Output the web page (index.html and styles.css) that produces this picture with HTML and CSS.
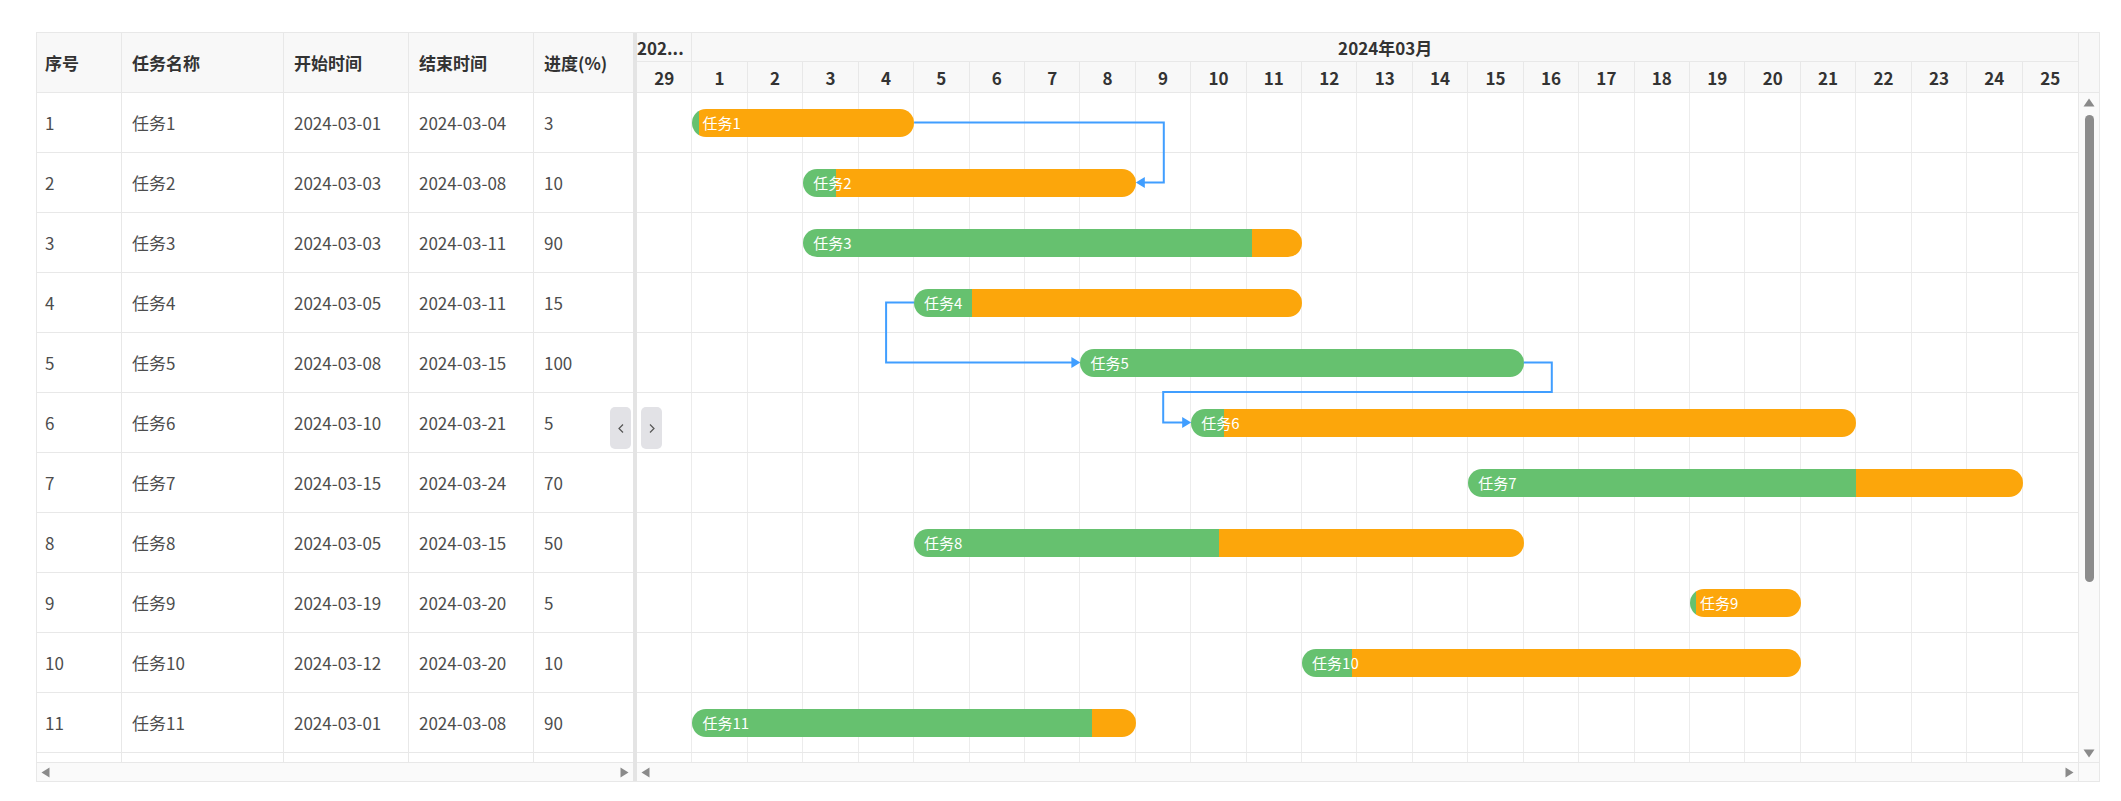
FILE: index.html
```html
<!DOCTYPE html>
<html lang="zh-CN">
<head>
<meta charset="utf-8">
<title>甘特图</title>
<link rel="stylesheet" href="styles.css">
</head>
<body>
<div class="wrap">
  <div class="table-pane">
    <div class="thead">
      <div class="th c1">序号</div>
      <div class="th c2">任务名称</div>
      <div class="th c3">开始时间</div>
      <div class="th c4">结束时间</div>
      <div class="th c5">进度(%)</div>
    </div>
    <div class="tbody">
      <div class="tr"><div class="td c1">1</div><div class="td c2">任务1</div><div class="td c3">2024-03-01</div><div class="td c4">2024-03-04</div><div class="td c5">3</div></div>
      <div class="tr"><div class="td c1">2</div><div class="td c2">任务2</div><div class="td c3">2024-03-03</div><div class="td c4">2024-03-08</div><div class="td c5">10</div></div>
      <div class="tr"><div class="td c1">3</div><div class="td c2">任务3</div><div class="td c3">2024-03-03</div><div class="td c4">2024-03-11</div><div class="td c5">90</div></div>
      <div class="tr"><div class="td c1">4</div><div class="td c2">任务4</div><div class="td c3">2024-03-05</div><div class="td c4">2024-03-11</div><div class="td c5">15</div></div>
      <div class="tr"><div class="td c1">5</div><div class="td c2">任务5</div><div class="td c3">2024-03-08</div><div class="td c4">2024-03-15</div><div class="td c5">100</div></div>
      <div class="tr"><div class="td c1">6</div><div class="td c2">任务6</div><div class="td c3">2024-03-10</div><div class="td c4">2024-03-21</div><div class="td c5">5</div></div>
      <div class="tr"><div class="td c1">7</div><div class="td c2">任务7</div><div class="td c3">2024-03-15</div><div class="td c4">2024-03-24</div><div class="td c5">70</div></div>
      <div class="tr"><div class="td c1">8</div><div class="td c2">任务8</div><div class="td c3">2024-03-05</div><div class="td c4">2024-03-15</div><div class="td c5">50</div></div>
      <div class="tr"><div class="td c1">9</div><div class="td c2">任务9</div><div class="td c3">2024-03-19</div><div class="td c4">2024-03-20</div><div class="td c5">5</div></div>
      <div class="tr"><div class="td c1">10</div><div class="td c2">任务10</div><div class="td c3">2024-03-12</div><div class="td c4">2024-03-20</div><div class="td c5">10</div></div>
      <div class="tr"><div class="td c1">11</div><div class="td c2">任务11</div><div class="td c3">2024-03-01</div><div class="td c4">2024-03-08</div><div class="td c5">90</div></div>
      <div class="tr"><div class="td c1"></div><div class="td c2"></div><div class="td c3"></div><div class="td c4"></div><div class="td c5"></div></div>
    </div>
    <div class="hscroll">
      <svg class="harrow" viewBox="0 0 9 11"><polygon points="0.5,5.5 8.5,0.5 8.5,10.5"/></svg>
      <svg class="harrow" viewBox="0 0 9 11"><polygon points="8.5,5.5 0.5,0.5 0.5,10.5"/></svg>
    </div>
  </div>

  <div class="splitter"></div>

  <div class="chart-pane">
    <div class="chart-main">
      <div class="chart-head">
        <div class="month-row">
          <div class="mcell first">202...</div>
          <div class="mcell rest">2024年03月</div>
        </div>
        <div class="day-row">
          <div class="dcell">29</div><div class="dcell">1</div><div class="dcell">2</div><div class="dcell">3</div><div class="dcell">4</div><div class="dcell">5</div><div class="dcell">6</div><div class="dcell">7</div><div class="dcell">8</div><div class="dcell">9</div><div class="dcell">10</div><div class="dcell">11</div><div class="dcell">12</div><div class="dcell">13</div><div class="dcell">14</div><div class="dcell">15</div><div class="dcell">16</div><div class="dcell">17</div><div class="dcell">18</div><div class="dcell">19</div><div class="dcell">20</div><div class="dcell">21</div><div class="dcell">22</div><div class="dcell">23</div><div class="dcell">24</div><div class="dcell">25</div>
        </div>
      </div>
      <div class="chart-body">
        <div class="cols"><i></i><i></i><i></i><i></i><i></i><i></i><i></i><i></i><i></i><i></i><i></i><i></i><i></i><i></i><i></i><i></i><i></i><i></i><i></i><i></i><i></i><i></i><i></i><i></i><i></i><i></i></div>
        <div class="rows">
          <div class="grow"><div class="bar" style="grid-column:2/6;--p:3%">任务1</div></div>
          <div class="grow"><div class="bar" style="grid-column:4/10;--p:10%">任务2</div></div>
          <div class="grow"><div class="bar" style="grid-column:4/13;--p:90%">任务3</div></div>
          <div class="grow"><div class="bar" style="grid-column:6/13;--p:15%">任务4</div></div>
          <div class="grow"><div class="bar" style="grid-column:9/17;--p:100%">任务5</div></div>
          <div class="grow"><div class="bar" style="grid-column:11/23;--p:5%">任务6</div></div>
          <div class="grow"><div class="bar" style="grid-column:16/26;--p:70%">任务7</div></div>
          <div class="grow"><div class="bar" style="grid-column:6/17;--p:50%">任务8</div></div>
          <div class="grow"><div class="bar" style="grid-column:20/22;--p:5%">任务9</div></div>
          <div class="grow"><div class="bar" style="grid-column:13/22;--p:10%">任务10</div></div>
          <div class="grow"><div class="bar" style="grid-column:2/10;--p:90%">任务11</div></div>
          <div class="grow"></div>
        </div>
        <svg class="links" viewBox="0 0 1441 669" width="1441" height="669">
          <path d="M277.1 29.5 H526.8 V89.5 H507"/>
          <polygon points="498.8,89.5 507.8,84 507.8,95"/>
          <path d="M277.1 209.5 H249.1 V269.5 H435"/>
          <polygon points="443.4,269.5 434.4,264 434.4,275"/>
          <path d="M886.8 269.5 H914.8 V299 H526.2 V329.5 H546"/>
          <polygon points="554.2,329.5 545.2,324 545.2,335"/>
        </svg>
      </div>
      <div class="hscroll">
        <svg class="harrow" viewBox="0 0 9 11"><polygon points="0.5,5.5 8.5,0.5 8.5,10.5"/></svg>
        <svg class="harrow" viewBox="0 0 9 11"><polygon points="8.5,5.5 0.5,0.5 0.5,10.5"/></svg>
      </div>
    </div>
    <div class="vscroll">
      <div class="vs-head"></div>
      <div class="vs-track">
        <svg class="varrow" viewBox="0 0 12 9"><polygon points="6,0.5 11.5,8.5 0.5,8.5"/></svg>
        <div class="vs-thumb"></div>
        <svg class="varrow down" viewBox="0 0 12 9"><polygon points="6,8.5 11.5,0.5 0.5,0.5"/></svg>
      </div>
      <div class="vs-corner"></div>
    </div>
  </div>

  <button class="split-btn left" type="button"><svg viewBox="0 0 6 9"><polyline points="5,0.5 1,4.5 5,8.5"/></svg></button>
  <button class="split-btn right" type="button"><svg viewBox="0 0 6 9"><polyline points="1,0.5 5,4.5 1,8.5"/></svg></button>
</div>
</body>
</html>
```

FILE: styles.css
```css
* { box-sizing: border-box; }

body {
  margin: 0;
  background: #fff;
  font-family: "Noto Sans CJK SC", "Noto Sans", sans-serif;
}

.wrap {
  position: relative;
  display: flex;
  margin: 32px 0 0 36px;
  width: 2064px;
  height: 750px;
  border: 1px solid #e8e8e8;
}

/* ---------- left table ---------- */
.table-pane {
  width: 596px;
  flex: none;
  display: flex;
  flex-direction: column;
}

.thead {
  display: flex;
  height: 60px;
  flex: none;
  background: #f8f8f8;
  border-bottom: 1px solid #e8e8e8;
}

.th, .td {
  display: flex;
  align-items: center;
  padding-left: 10px;
  font-size: 17px;
  white-space: nowrap;
  border-right: 1px solid #e8e8e8;
}

.th { font-weight: bold; color: #333; }
.td { color: #4d4d4d; }

.c1 { width: 85px; padding-left: 8px; }
.c2 { width: 162px; }
.c3 { width: 125px; }
.c4 { width: 125px; }
.c5 { width: 99px; border-right: none; }

.tbody {
  flex: 1;
  overflow: hidden;
}

.tr {
  display: flex;
  height: 60px;
  border-bottom: 1px solid #e8e8e8;
}

.hscroll {
  height: 19px;
  flex: none;
  display: flex;
  justify-content: space-between;
  align-items: center;
  padding: 0 4px;
  background: #fafafa;
  border-top: 1px solid #e8e8e8;
}

.harrow { width: 9px; height: 11px; fill: #8a8a8a; display: block; }

.splitter {
  width: 4px;
  flex: none;
  background: #e4e4e4;
}

/* ---------- chart ---------- */
.chart-pane {
  flex: 1;
  display: flex;
}

.chart-main {
  width: 1441px;
  flex: none;
  display: flex;
  flex-direction: column;
}

.chart-head {
  height: 60px;
  flex: none;
  display: flex;
  flex-direction: column;
  background: #f8f8f8;
  border-bottom: 1px solid #e8e8e8;
}

.month-row {
  height: 29px;
  flex: none;
  display: grid;
  grid-template-columns: repeat(26, 1fr);
  border-bottom: 1px solid #e8e8e8;
}

.mcell {
  font-size: 17px;
  font-weight: bold;
  color: #333;
  line-height: 30px;
  white-space: nowrap;
  overflow: hidden;
}

.mcell.first { border-right: 1px solid #e8e8e8; padding-left: 0; }
.mcell.rest { grid-column: 2 / -1; text-align: center; }

.day-row {
  flex: 1;
  display: grid;
  grid-template-columns: repeat(26, 1fr);
}

.dcell {
  display: flex;
  align-items: center;
  justify-content: center;
  font-size: 17px;
  font-weight: bold;
  color: #333;
  border-right: 1px solid #e8e8e8;
}

.dcell:last-child { border-right: none; }

.chart-body {
  position: relative;
  flex: 1;
  display: grid;
  grid-template: 1fr / 1fr;
  overflow: hidden;
}

.cols, .rows { grid-area: 1 / 1; }

.cols {
  display: grid;
  grid-template-columns: repeat(26, 1fr);
}

.cols i { border-right: 1px solid #ececec; }
.cols i:last-child { border-right: none; }

.rows {
  display: flex;
  flex-direction: column;
}

.grow {
  height: 60px;
  flex: none;
  display: grid;
  grid-template-columns: repeat(26, 1fr);
  align-items: center;
  border-bottom: 1px solid #e8e8e8;
}

.bar {
  height: 28px;
  border-radius: 14px;
  background: linear-gradient(90deg, #66c16f var(--p), #fca60b var(--p));
  color: #fff;
  font-size: 15px;
  line-height: 28px;
  padding-left: 10px;
  white-space: nowrap;
  overflow: hidden;
}

.links {
  position: absolute;
  left: 0;
  top: 0;
  pointer-events: none;
}

.links path { fill: none; stroke: #409eff; stroke-width: 2; }
.links polygon { fill: #409eff; }

/* ---------- vertical scrollbar ---------- */
.vscroll {
  width: 21px;
  flex: none;
  display: flex;
  flex-direction: column;
  border-left: 1px solid #e8e8e8;
}

.vs-head {
  height: 60px;
  flex: none;
  background: #f8f8f8;
  border-bottom: 1px solid #e8e8e8;
}

.vs-track {
  flex: 1;
  display: flex;
  flex-direction: column;
  align-items: center;
  padding: 5px 0 4px;
  background: #fafafa;
}

.varrow { width: 12px; height: 9px; fill: #8a8a8a; display: block; flex: none; }
.varrow.down { margin-top: auto; }

.vs-thumb {
  width: 9px;
  height: 467px;
  margin-top: 8px;
  border-radius: 5px;
  background: #8c8c8c;
}

.vs-corner {
  height: 19px;
  flex: none;
  background: #fafafa;
  border-top: 1px solid #e8e8e8;
}

/* ---------- splitter buttons ---------- */
.split-btn {
  position: absolute;
  top: 374px;
  width: 21px;
  height: 42px;
  padding: 0;
  border: none;
  border-radius: 5px;
  background: #e2e2e6;
  display: flex;
  align-items: center;
  justify-content: center;
}

.split-btn.left { left: 573px; }
.split-btn.right { left: 604px; }

.split-btn svg {
  width: 6px;
  height: 9px;
  fill: none;
  stroke: #555;
  stroke-width: 1.2;
}
```
